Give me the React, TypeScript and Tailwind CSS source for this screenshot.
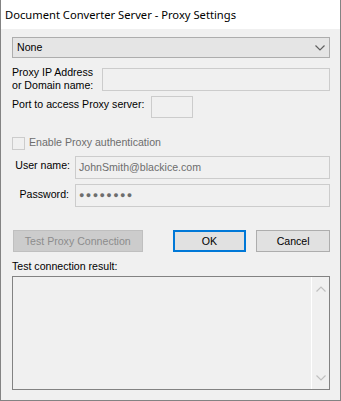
import React from "react";

const Chevron = ({ down = true, color = "#606060" }: { down?: boolean; color?: string }) => (
  <svg width="10" height="6" viewBox="0 0 10 6" className="block">
    <path
      d={down ? "M0.5 0.5 L5 5 L9.5 0.5" : "M0.5 5.5 L5 1 L9.5 5.5"}
      fill="none"
      stroke={color}
      strokeWidth="1.2"
    />
  </svg>
);

export default function App() {
  const body = { fontFamily: '"Liberation Sans", Arial, sans-serif' };
  return (
    <div
      className="w-[341px] h-[401px] bg-[#f0f0f0] border-l border-r border-b border-[#838383] flex flex-col text-[10.6px] leading-[13px] text-black"
      style={body}
    >
      <div
        className="h-[29px] bg-white flex items-center pl-[4px] text-[11.2px] text-black"
        style={{ fontFamily: '"Noto Sans", "Open Sans", sans-serif' }}
      >
        Document Converter Server - Proxy Settings
      </div>
      <div className="flex flex-col pl-[11px] pr-[10px]">
        {/* combo */}
        <div className="mt-[8px] h-[21px] bg-[#e5e5e5] border border-[#adadad] flex items-center justify-between pl-[4px] pr-[4px]">
          <span>None</span>
          <Chevron />
        </div>
        {/* IP */}
        <div className="mt-[10px] h-[23px] flex items-start">
          <div className="w-[90px] mt-[-2px]">
            <div>Proxy IP Address</div>
            <div>or Domain name:</div>
          </div>
          <div className="flex-1 h-[23px] bg-[#f0f0f0] border border-[#cccccc]" />
        </div>
        {/* Port */}
        <div className="mt-[5px] h-[22px] flex items-start">
          <div className="w-[139px] mt-[2px]">Port to access Proxy server:</div>
          <div className="w-[42px] h-[22px] bg-[#f0f0f0] border border-[#cccccc]" />
        </div>
        {/* checkbox */}
        <div className="mt-[19px] flex items-start h-[13px]">
          <div className="w-[13px] h-[13px] border border-[#cccccc] bg-[#f0f0f0]" />
          <span className="ml-[4px] mt-[-1px] text-[#6d6d6d]">Enable Proxy authentication</span>
        </div>
        {/* user name */}
        <div className="mt-[6px] h-[23px] flex items-start">
          <div className="w-[63px] text-right pr-[5px] mt-[3px]">User name:</div>
          <div className="flex-1 h-[23px] bg-[#f0f0f0] border border-[#cccccc] flex items-center pl-[3px] text-[#6d6d6d]">
            JohnSmith@blackice.com
          </div>
        </div>
        <div className="mt-[5px] h-[23px] flex items-start">
          <div className="w-[63px] text-right pr-[6px] mt-[4px]">Password:</div>
          <div className="flex-1 h-[23px] bg-[#f0f0f0] border border-[#cccccc] flex items-center pl-[3px] text-[#6d6d6d] text-[9px] tracking-[1.4px]">
            ●●●●●●●●
          </div>
        </div>
        {/* buttons */}
        <div className="mt-[23px] flex items-center">
          <div className="ml-[1px] w-[130px] h-[22px] bg-[#cccccc] border border-[#bfbfbf] flex items-center justify-center text-[#8d8d8d]">
            Test Proxy Connection
          </div>
          <div className="ml-[30px] w-[74px] h-[22px] bg-[#e1e1e1] border-2 border-[#0078d7] flex items-center justify-center">
            OK
          </div>
          <div className="ml-[10px] w-[74px] h-[22px] bg-[#e1e1e1] border border-[#adadad] flex items-center justify-center">
            Cancel
          </div>
        </div>
        <div className="mt-[8px]">Test connection result:</div>
        <div className="mt-[3px] h-[114px] border border-[#828282] bg-[#f0f0f0] flex justify-end">
          <div className="w-[18px] border-l border-[#ffffff] flex flex-col items-center justify-between pt-[9px] pb-[8px]">
            <Chevron down={false} color="#c0c0c0" />
            <Chevron color="#c0c0c0" />
          </div>
        </div>
      </div>
    </div>
  );
}
